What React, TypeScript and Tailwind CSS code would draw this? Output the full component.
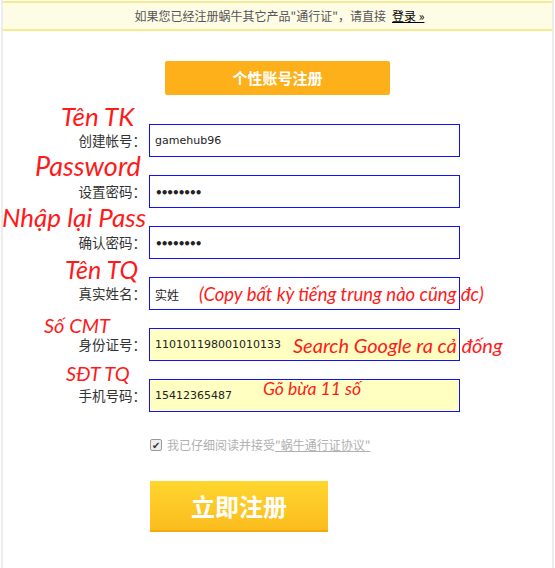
const cjk = "font-['Noto_Sans_CJK_SC',sans-serif]";
const note = "font-['Lato','Open_Sans',sans-serif] italic text-[#ff1a1a]";

type Row = {
  label: string;
  value: string;
  tag: string;
  tagClass: string;
  inside?: string;
  insideClass?: string;
  yellow?: boolean;
  cjkValue?: boolean;
  dots?: boolean;
};

const rows: Row[] = [
  { label: "创建帐号：", value: "gamehub96", tag: "Tên TK", tagClass: "left-[58px] top-[-3px] text-[26px]" },
  { label: "设置密码：", value: "••••••••", tag: "Password", tagClass: "left-[32px] top-[-5px] text-[27px]", dots: true },
  { label: "确认密码：", value: "••••••••", tag: "Nhập lại Pass", tagClass: "left-[-1px] top-[-4px] text-[26px]", dots: true },
  {
    label: "真实姓名：",
    value: "实姓",
    tag: "Tên TQ",
    tagClass: "left-[62px] top-[-2px] text-[25px]",
    cjkValue: true,
    inside: "(Copy bất kỳ tiếng trung nào cũng đc)",
    insideClass: "left-[196px] top-[26px] text-[18.5px]",
  },
  {
    label: "身份证号：",
    value: "110101198001010133",
    tag: "Số CMT",
    tagClass: "left-[41px] top-[5px] text-[20px]",
    yellow: true,
    inside: "Search Google ra cả đống",
    insideClass: "left-[290px] top-[25px] text-[20px]",
  },
  {
    label: "手机号码：",
    value: "15412365487",
    tag: "SĐT TQ",
    tagClass: "left-[63px] top-[2px] text-[20px]",
    yellow: true,
    inside: "Gõ bừa 11 số",
    insideClass: "left-[260px] top-[19px] text-[17.5px]",
  },
];

function FormRow({ row }: { row: Row }) {
  return (
    <div className="relative flex h-[51px] items-end">
      <div className={`flex h-[33px] w-[143px] items-center justify-end text-[13.5px] text-[#333] ${cjk}`}>
        {row.label}
      </div>
      <div
        className={`ml-[3px] flex h-[33px] w-[311px] items-center border-[1.5px] border-[#1010ff] pl-[5px] pt-[2px] text-[#222] ${
          row.yellow ? "bg-[#ffffc2]" : "bg-white"
        } ${row.cjkValue ? `text-[12px] ${cjk}` : "text-[11px] font-['DejaVu_Sans',sans-serif]"} ${
          row.dots ? "tracking-[-2px] text-[12px] font-bold" : ""
        }`}
      >
        {row.value}
      </div>
      <span className={`absolute whitespace-nowrap leading-none ${note} ${row.tagClass}`}>{row.tag}</span>
      {row.inside && (
        <span className={`absolute whitespace-nowrap leading-none ${note} ${row.insideClass}`}>{row.inside}</span>
      )}
    </div>
  );
}

export default function App() {
  return (
    <div className="h-[568px] w-[555px] bg-white px-px">
      <div className="flex h-full flex-col border-x-2 border-[#ececec]">
        <div
          className={`mt-px flex h-[30px] items-center justify-center border-y-2 border-[#f6ec8c] bg-[#fffce6] pl-[4px] text-[12px] text-[#555] ${cjk}`}
        >
          如果您已经注册蜗牛其它产品"通行证"，请直接
          <span className="ml-[6px] text-black underline">登录 »</span>
        </div>

        <div
          className={`mx-auto mt-[30px] flex h-[34px] w-[225px] items-center justify-center rounded-[2px] bg-[#fdb019] text-[15px] font-bold text-white ${cjk}`}
        >
          个性账号注册
        </div>

        <div className="mt-[11px] flex flex-col">
          {rows.map((r) => (
            <FormRow key={r.label} row={r} />
          ))}
        </div>

        <div className={`ml-[147px] mt-[24px] flex items-center gap-[5px] text-[12px] text-[#b0b0b0] ${cjk}`}>
          <span className="flex h-[12px] w-[12px] items-center justify-center rounded-[2px] border border-[#999] bg-[#eee] text-[10px] leading-none text-[#333]">
            ✔
          </span>
          <span>
            我已仔细阅读并接受<span className="underline">"蜗牛通行证协议"</span>
          </span>
        </div>

        <div
          className={`ml-[147px] mt-[27px] flex h-[51px] w-[178px] items-center justify-center border-b-2 border-[#f5a90f] bg-gradient-to-b from-[#ffd62e] to-[#fbbc1e] text-[24px] font-bold text-white ${cjk}`}
        >
          立即注册
        </div>
      </div>
    </div>
  );
}
